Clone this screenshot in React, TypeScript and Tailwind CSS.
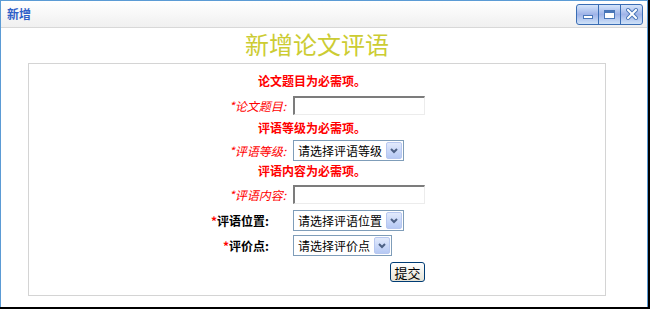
import React from "react";

const font = { fontFamily: '"Noto Sans CJK SC", "Liberation Sans", sans-serif' };

function TitleButtons() {
  return (
    <div className="flex h-[21px] w-[67px] rounded-[3px] border border-[#3a6db4] bg-gradient-to-b from-[#d6e6fb] via-[#9fb3e8] to-[#cfe2f8] overflow-hidden">
      <div className="flex flex-1 items-center justify-center border-r border-[#3a6db4]">
        <div className="mt-[5px] h-[4px] w-[10px] border border-[#4a76b8] bg-white" />
      </div>
      <div className="flex flex-1 items-center justify-center border-r border-[#3a6db4]">
        <div className="h-[9px] w-[11px] border border-[#4a76b8] border-t-[3px] bg-white" />
      </div>
      <div className="flex flex-1 items-center justify-center">
        <svg width="12" height="12" viewBox="0 0 12 12">
          <path d="M2 2 L10 10 M10 2 L2 10" stroke="#4a76b8" strokeWidth="4" strokeLinecap="square" />
          <path d="M2 2 L10 10 M10 2 L2 10" stroke="#ffffff" strokeWidth="2" strokeLinecap="square" />
        </svg>
      </div>
    </div>
  );
}

function Select({ text, width }: { text: string; width: string }) {
  return (
    <div className={`flex h-[21px] items-center justify-between border border-[#7f9db9] bg-white pl-[4px] pr-[1px] ${width}`}>
      <span className="whitespace-nowrap text-[12px] leading-none text-black">{text}</span>
      <div className="flex h-[17px] w-[16px] shrink-0 items-center justify-center rounded-[2px] border border-[#b8c8f0] bg-gradient-to-b from-[#e2eafc] to-[#b6c9f4]">
        <svg width="8" height="6" viewBox="0 0 8 6">
          <path d="M1 1 L4 4 L7 1" fill="none" stroke="#4d6185" strokeWidth="2" />
        </svg>
      </div>
    </div>
  );
}

function Input() {
  return (
    <div className="h-[19px] w-[132px] border-t-2 border-l-2 border-r border-b border-t-[#7c7c7c] border-l-[#7c7c7c] border-r-[#ececec] border-b-[#ececec] bg-white" />
  );
}

function ErrorLine({ text, mt }: { text: string; mt: string }) {
  return (
    <div className={`pl-[229px] text-[12px] font-bold leading-[16px] text-[#ff0000] ${mt}`}>{text}</div>
  );
}

function ItalicRow({ label, mt, children }: { label: string; mt: string; children: React.ReactNode }) {
  return (
    <div className={`flex items-center ${mt}`}>
      <div className="w-[257px] text-right text-[12px] italic text-[#ff0000]">*{label}:</div>
      <div className="ml-[7px]">{children}</div>
    </div>
  );
}

function BoldRow({ label, mt, children }: { label: string; mt: string; children: React.ReactNode }) {
  return (
    <div className={`flex items-center ${mt}`}>
      <div className="w-[257px] pr-[17px] text-right text-[12px] font-bold text-black">
        <span className="text-[#ff0000]">*</span>
        {label}:
      </div>
      <div className="ml-[7px]">{children}</div>
    </div>
  );
}

export default function App() {
  return (
    <div className="h-[309px] w-[650px] border-r-2 border-b-2 border-black bg-white" style={font}>
      <div className="flex h-full flex-col border-l border-t border-r border-[#5b9bd5]">
        {/* title bar */}
        <div className="flex h-[27px] items-center justify-between border-b border-[#d8d8d8] bg-gradient-to-b from-white to-[#f0f0f0] pl-[6px] pr-[4px]">
          <span className="text-[12px] font-bold text-[#2f5fc8]">新增</span>
          <TitleButtons />
        </div>

        <div className="ml-[27px] w-[578px]">
          <h1 className="mt-[1px] h-[30px] text-center text-[24px] leading-[30px] text-[#cccc33]">新增论文评语</h1>

          <div className="mt-[4px] h-[233px] border border-[#d4d4d4] pt-[9px]">
            <ErrorLine text="论文题目为必需项。" mt="" />
            <ItalicRow label="论文题目" mt="mt-[7px]">
              <Input />
            </ItalicRow>
            <ErrorLine text="评语等级为必需项。" mt="mt-[5px]" />
            <ItalicRow label="评语等级" mt="mt-[4px]">
              <Select text="请选择评语等级" width="w-[111px]" />
            </ItalicRow>
            <ErrorLine text="评语内容为必需项。" mt="mt-[2px]" />
            <ItalicRow label="评语内容" mt="mt-[6px]">
              <Input />
            </ItalicRow>
            <BoldRow label="评语位置" mt="mt-[6px]">
              <Select text="请选择评语位置" width="w-[111px]" />
            </BoldRow>
            <BoldRow label="评价点" mt="mt-[4px]">
              <Select text="请选择评价点" width="w-[99px]" />
            </BoldRow>
            <div className="mt-[6px] ml-[264px] flex w-[132px] justify-end">
              <button className="h-[20px] w-[35px] rounded-[3px] border border-[#003c74] bg-gradient-to-b from-white to-[#e6e3d6] text-[13px] leading-none text-black">
                提交
              </button>
            </div>
          </div>
        </div>
      </div>
    </div>
  );
}
